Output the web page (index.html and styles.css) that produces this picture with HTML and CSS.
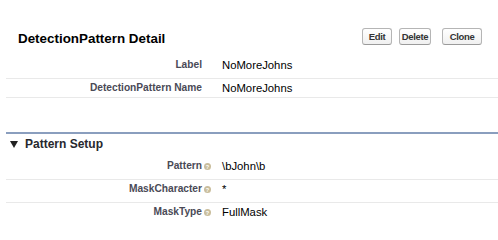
FILE: index.html
```html
<!DOCTYPE html>
<html lang="en">
<head>
<meta charset="utf-8">
<title>DetectionPattern Detail</title>
<link rel="stylesheet" href="styles.css">
</head>
<body>
<div class="page">
  <div class="header">
    <h2 class="title">DetectionPattern Detail</h2>
    <div class="buttons">
      <button class="btn btn-edit">Edit</button>
      <button class="btn btn-delete">Delete</button>
      <button class="btn btn-clone">Clone</button>
    </div>
  </div>

  <div class="list list-top">
    <div class="row">
      <div class="label">Label</div>
      <div class="value">NoMoreJohns</div>
    </div>
    <div class="row">
      <div class="label">DetectionPattern Name</div>
      <div class="value">NoMoreJohns</div>
    </div>
  </div>

  <div class="section">
    <h3 class="section-title">
      <svg class="caret" width="8" height="7" viewBox="0 0 8 7" aria-hidden="true"><polygon points="0,0 8,0 4,7" fill="#222"/></svg>
      <span>Pattern Setup</span>
    </h3>
    <div class="list list-setup">
      <div class="row">
        <div class="label">Pattern<span class="help"><svg width="7" height="7" viewBox="0 0 7 7" aria-hidden="true"><circle cx="3.5" cy="3.5" r="3.5" fill="#c9bd9c"/><text x="3.5" y="5.6" text-anchor="middle" font-family="Liberation Sans, Arial, sans-serif" font-size="5.5" font-weight="bold" fill="#fff">?</text></svg></span></div>
        <div class="value">\bJohn\b</div>
      </div>
      <div class="row">
        <div class="label">MaskCharacter<span class="help"><svg width="7" height="7" viewBox="0 0 7 7" aria-hidden="true"><circle cx="3.5" cy="3.5" r="3.5" fill="#c9bd9c"/><text x="3.5" y="5.6" text-anchor="middle" font-family="Liberation Sans, Arial, sans-serif" font-size="5.5" font-weight="bold" fill="#fff">?</text></svg></span></div>
        <div class="value">*</div>
      </div>
      <div class="row">
        <div class="label">MaskType<span class="help"><svg width="7" height="7" viewBox="0 0 7 7" aria-hidden="true"><circle cx="3.5" cy="3.5" r="3.5" fill="#c9bd9c"/><text x="3.5" y="5.6" text-anchor="middle" font-family="Liberation Sans, Arial, sans-serif" font-size="5.5" font-weight="bold" fill="#fff">?</text></svg></span></div>
        <div class="value">FullMask</div>
      </div>
    </div>
  </div>
</div>
</body>
</html>
```

FILE: styles.css
```css
html, body {
  margin: 0;
  padding: 0;
  background: #fff;
}

body {
  font-family: "Liberation Sans", Arial, Helvetica, sans-serif;
  color: #000;
}

.page {
  padding-left: 6px;
}

.header {
  display: flex;
  justify-content: space-between;
  align-items: flex-start;
  padding: 28px 16px 9px 12px;
}

.title {
  margin: 3px 0 0 0;
  font-size: 13.4px;
  line-height: 16px;
  font-weight: bold;
  color: #000;
}

.buttons {
  display: flex;
}

.btn {
  box-sizing: border-box;
  height: 17px;
  margin: 0;
  padding: 1px 0 0 0;
  font-family: "Liberation Sans", Arial, Helvetica, sans-serif;
  font-size: 9.5px;
  font-weight: bold;
  letter-spacing: -0.35px;
  line-height: 14px;
  color: #333;
  text-align: center;
  background: linear-gradient(#ffffff, #f0f0f0);
  border: 1px solid #b5b5b5;
  border-bottom-color: #9a9a9a;
  border-radius: 3px;
}

.btn-edit {
  width: 30px;
}

.btn-delete {
  width: 32px;
  margin-left: 7px;
}

.btn-clone {
  width: 40px;
  margin-left: 11px;
}

.row {
  display: grid;
  grid-template-columns: 206px 1fr;
  padding: 2px 0 6px 0;
  border-bottom: 1px solid #e9e9e9;
  line-height: 14px;
}

.list-top .row:last-child {
  padding-bottom: 2px;
}

.list-setup .row:last-child {
  border-bottom: none;
}

.label {
  padding-right: 10px;
  text-align: right;
  font-size: 10.2px;
  font-weight: bold;
  color: #4a4a56;
}

.value {
  padding-left: 10px;
  font-size: 11.3px;
  color: #000;
}

.help {
  display: inline-block;
  width: 7px;
  height: 7px;
  margin-left: 2px;
  margin-right: -9px;
  vertical-align: -1px;
}

.help svg {
  display: block;
}

.section {
  margin-top: 34px;
  border-top: 2px solid #8a9ebe;
}

.section-title {
  display: flex;
  align-items: center;
  margin: 0;
  padding: 2px 0 4px 4px;
  line-height: 17px;
  font-size: 12px;
  font-weight: bold;
  color: #27282e;
}

.caret {
  display: block;
  margin-right: 7px;
}
```
